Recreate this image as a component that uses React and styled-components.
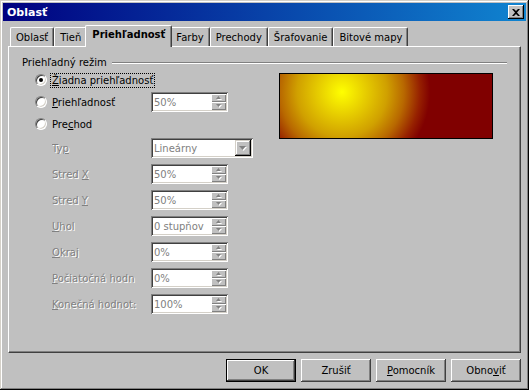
import React from 'react'
import styled, { createGlobalStyle } from 'styled-components'

const GlobalStyle = createGlobalStyle`
  html, body {
    margin: 0;
    padding: 0;
    background: #c0c0c0;
  }
  body {
    font-family: "DejaVu Sans", Tahoma, sans-serif;
    font-size: 10px;
    color: #000;
  }
`;

const Window = styled.div`
  width: 529px;
  height: 390px;
  box-sizing: border-box;
  padding: 3px;
  background: #c0c0c0;
  box-shadow: inset -1px -1px #000, inset 1px 1px #d4d0c8,
    inset -2px -2px #808080, inset 2px 2px #fff;
  display: flex;
  flex-direction: column;
`;

const TitleBar = styled.div`
  height: 18px;
  display: flex;
  align-items: center;
  justify-content: space-between;
  padding: 0 2px 0 4px;
  background: linear-gradient(to right, #000080, #1084d0);
`;

const Title = styled.span`
  color: #fff;
  font-weight: bold;
  font-size: 11px;
`;

const CloseButton = styled.div`
  width: 16px;
  height: 14px;
  box-sizing: border-box;
  background: #c0c0c0;
  box-shadow: inset -1px -1px #000, inset 1px 1px #fff, inset -2px -2px #808080;
  display: flex;
  align-items: center;
  justify-content: center;
`;

const Body = styled.div`
  padding: 4px 5px 0 5px;
  display: flex;
  flex-direction: column;
`;

const TabStrip = styled.div`
  height: 21px;
  display: flex;
  align-items: flex-end;
  padding-left: 2px;
`;

const Tab = styled.div`
  position: relative;
  z-index: ${p => (p.$active ? 2 : 1)};
  height: ${p => (p.$active ? '22px' : '19px')};
  margin: ${p => (p.$active ? '0 -2px -1px -2px' : '0')};
  box-sizing: border-box;
  padding: 0 ${p => (p.$active ? '6px' : '5px')} 0 ${p => (p.$active ? '6px' : '5px')};
  display: flex;
  align-items: ${p => (p.$active ? 'flex-start' : 'center')};
  padding-top: ${p => (p.$active ? '3px' : '0')};
  background: #c0c0c0;
  border-top: 1px solid #fff;
  border-left: 1px solid #fff;
  border-right: 1px solid #404040;
  border-radius: 2px 2px 0 0;
  box-shadow: inset -1px 0 #808080;
  font-weight: ${p => (p.$active ? 'bold' : 'normal')};
  white-space: nowrap;
`;

const Panel = styled.div`
  height: 307px;
  box-sizing: border-box;
  border: 1px solid;
  border-color: #fff #404040 #404040 #fff;
  box-shadow: inset -1px -1px #808080;
  padding: 9px 13px 0 13px;
  display: flex;
  flex-direction: column;
`;

const Heading = styled.div`
  height: 13px;
  display: flex;
  align-items: center;
  gap: 5px;
`;

const HeadingLine = styled.div`
  flex: 1;
  height: 1px;
  background: #808080;
  border-bottom: 1px solid #fff;
`;

const Content = styled.div`
  display: flex;
`;

const Column = styled.div`
  padding-left: 13px;
  display: flex;
  flex-direction: column;
`;

const RadioRow = styled.div`
  height: 22px;
  display: flex;
  align-items: center;
`;

const Radio = styled.div`
  width: 12px;
  height: 12px;
  box-sizing: border-box;
  border-radius: 50%;
  background: #fff;
  border: 1px solid;
  border-color: #808080 #fff #fff #808080;
  box-shadow: inset 1px 1px #404040, inset -1px -1px #d4d0c8;
  display: flex;
  align-items: center;
  justify-content: center;

  &::after {
    content: '';
    display: ${p => (p.$checked ? 'block' : 'none')};
    width: 4px;
    height: 4px;
    border-radius: 50%;
    background: #000;
  }
`;

const RadioLabel = styled.span`
  margin-left: 4px;
  padding: 1px;
  width: ${p => (p.$width ? p.$width : 'auto')};
  outline: ${p => (p.$focus ? '1px dotted #000' : 'none')};
`;

const FieldGrid = styled.div`
  margin-top: 3px;
  padding-left: 17px;
  display: grid;
  grid-template-columns: 99px auto;
  grid-auto-rows: 20px;
  row-gap: 6px;
  align-items: center;
`;

const DisabledLabel = styled.span`
  color: #808080;
  text-shadow: 1px 1px #fff;
  white-space: nowrap;
  overflow: hidden;
`;

const Field = styled.div`
  width: ${p => p.$width}px;
  height: 20px;
  box-sizing: border-box;
  background: #fff;
  box-shadow: inset 1px 1px #808080, inset -1px -1px #fff,
    inset 2px 2px #404040, inset -2px -2px #d4d0c8;
  display: flex;
  align-items: center;
  padding: 2px;
`;

const FieldText = styled.span`
  flex: 1;
  padding-left: 1px;
  color: #808080;
`;

const SpinButtons = styled.div`
  width: 15px;
  height: 16px;
  display: flex;
  flex-direction: column;
`;

const SpinButton = styled.div`
  flex: 1;
  background: #c0c0c0;
  box-shadow: inset 1px 1px #fff, inset -1px -1px #808080;
  display: flex;
  align-items: center;
  justify-content: center;
`;

const DropButton = styled.div`
  width: 16px;
  height: 16px;
  box-sizing: border-box;
  background: #c0c0c0;
  box-shadow: inset -1px -1px #000, inset 1px 1px #d4d0c8,
    inset -2px -2px #808080, inset 2px 2px #fff;
  display: flex;
  align-items: center;
  justify-content: center;
`;

const Preview = styled.div`
  margin: 4px 14px 0 auto;
  width: 214px;
  height: 66px;
  box-sizing: border-box;
  border: 1px solid #000;
  background: radial-gradient(
    circle at 62px 18px,
    #ffff00 0px,
    #e8d000 22px,
    #d0a000 45px,
    #b86800 62px,
    #962000 78px,
    #800000 88px
  );
`;

const ButtonRow = styled.div`
  margin-top: 6px;
  display: flex;
  justify-content: flex-end;
  gap: 5px;
`;

const Button = styled.div`
  width: 70px;
  height: 23px;
  box-sizing: border-box;
  background: #c0c0c0;
  display: flex;
  align-items: center;
  justify-content: center;
  box-shadow: ${p =>
    p.$default
      ? 'inset 1px 1px #000, inset -1px -1px #000, inset -2px -2px #404040, inset 2px 2px #fff, inset -3px -3px #808080'
      : 'inset -1px -1px #404040, inset 1px 1px #fff, inset -2px -2px #808080'};
`;

const Arrow = ({ dir = 'up', w = 5, h = 3 }) => (
  <svg width={w + 1} height={h + 1} viewBox={`0 0 ${w + 1} ${h + 1}`}>
    {dir === 'up' ? (
      <>
        <polygon points={`${1 + w / 2},1 ${w + 1},${h + 1} 1,${h + 1}`} fill="#fff" />
        <polygon points={`${w / 2},0 ${w},${h} 0,${h}`} fill="#808080" />
      </>
    ) : (
      <>
        <polygon points={`1,1 ${w + 1},1 ${1 + w / 2},${h + 1}`} fill="#fff" />
        <polygon points={`0,0 ${w},0 ${w / 2},${h}`} fill="#808080" />
      </>
    )}
  </svg>
);

const Spin = ({ value, width = 77 }) => (
  <Field $width={width}>
    <FieldText>{value}</FieldText>
    <SpinButtons>
      <SpinButton><Arrow dir="up" /></SpinButton>
      <SpinButton><Arrow dir="down" /></SpinButton>
    </SpinButtons>
  </Field>
);

const tabs = ['Oblasť', 'Tieň', 'Priehľadnosť', 'Farby', 'Prechody', 'Šrafovanie', 'Bitové mapy'];

const fields = [
  { label: <>Stred <u>X</u></>, value: '50%' },
  { label: <>Stred <u>Y</u></>, value: '50%' },
  { label: <><u>U</u>hol</>, value: '0 stupňov' },
  { label: <><u>O</u>kraj</>, value: '0%' },
  { label: <><u>P</u>očiatočná hodn</>, value: '0%' },
  { label: <><u>K</u>onečná hodnot:</>, value: '100%' },
];

export default function App() {
  return (
    <>
      <GlobalStyle />
      <Window>
        <TitleBar>
          <Title>Oblasť</Title>
          <CloseButton>
            <svg width="8" height="7" viewBox="0 0 8 7">
              <path d="M0 0h2l2 2 2-2h2L5 3.5 8 7H6L4 5 2 7H0l3-3.5z" fill="#000" />
            </svg>
          </CloseButton>
        </TitleBar>
        <Body>
          <TabStrip>
            {tabs.map(t => (
              <Tab key={t} $active={t === 'Priehľadnosť'}>{t}</Tab>
            ))}
          </TabStrip>
          <Panel>
            <Heading>
              <span>Priehľadný režim</span>
              <HeadingLine />
            </Heading>
            <Content>
              <Column>
                <RadioRow>
                  <Radio $checked />
                  <RadioLabel $focus><u>Ž</u>iadna priehľadnosť</RadioLabel>
                </RadioRow>
                <RadioRow>
                  <Radio />
                  <RadioLabel $width="98px"><u>P</u>riehľadnosť</RadioLabel>
                  <Spin value="50%" />
                </RadioRow>
                <RadioRow>
                  <Radio />
                  <RadioLabel>Pre<u>c</u>hod</RadioLabel>
                </RadioRow>
                <FieldGrid>
                  <DisabledLabel>Ty<u>p</u></DisabledLabel>
                  <Field $width={102}>
                    <FieldText>Lineárny</FieldText>
                    <DropButton><Arrow dir="down" w={7} h={4} /></DropButton>
                  </Field>
                  {fields.map((f, i) => (
                    <React.Fragment key={i}>
                      <DisabledLabel>{f.label}</DisabledLabel>
                      <Spin value={f.value} />
                    </React.Fragment>
                  ))}
                </FieldGrid>
              </Column>
              <Preview />
            </Content>
          </Panel>
          <ButtonRow>
            <Button $default>OK</Button>
            <Button>Zrušiť</Button>
            <Button><span><u>P</u>omocník</span></Button>
            <Button><span>Obno<u>v</u>iť</span></Button>
          </ButtonRow>
        </Body>
      </Window>
    </>
  );
}
